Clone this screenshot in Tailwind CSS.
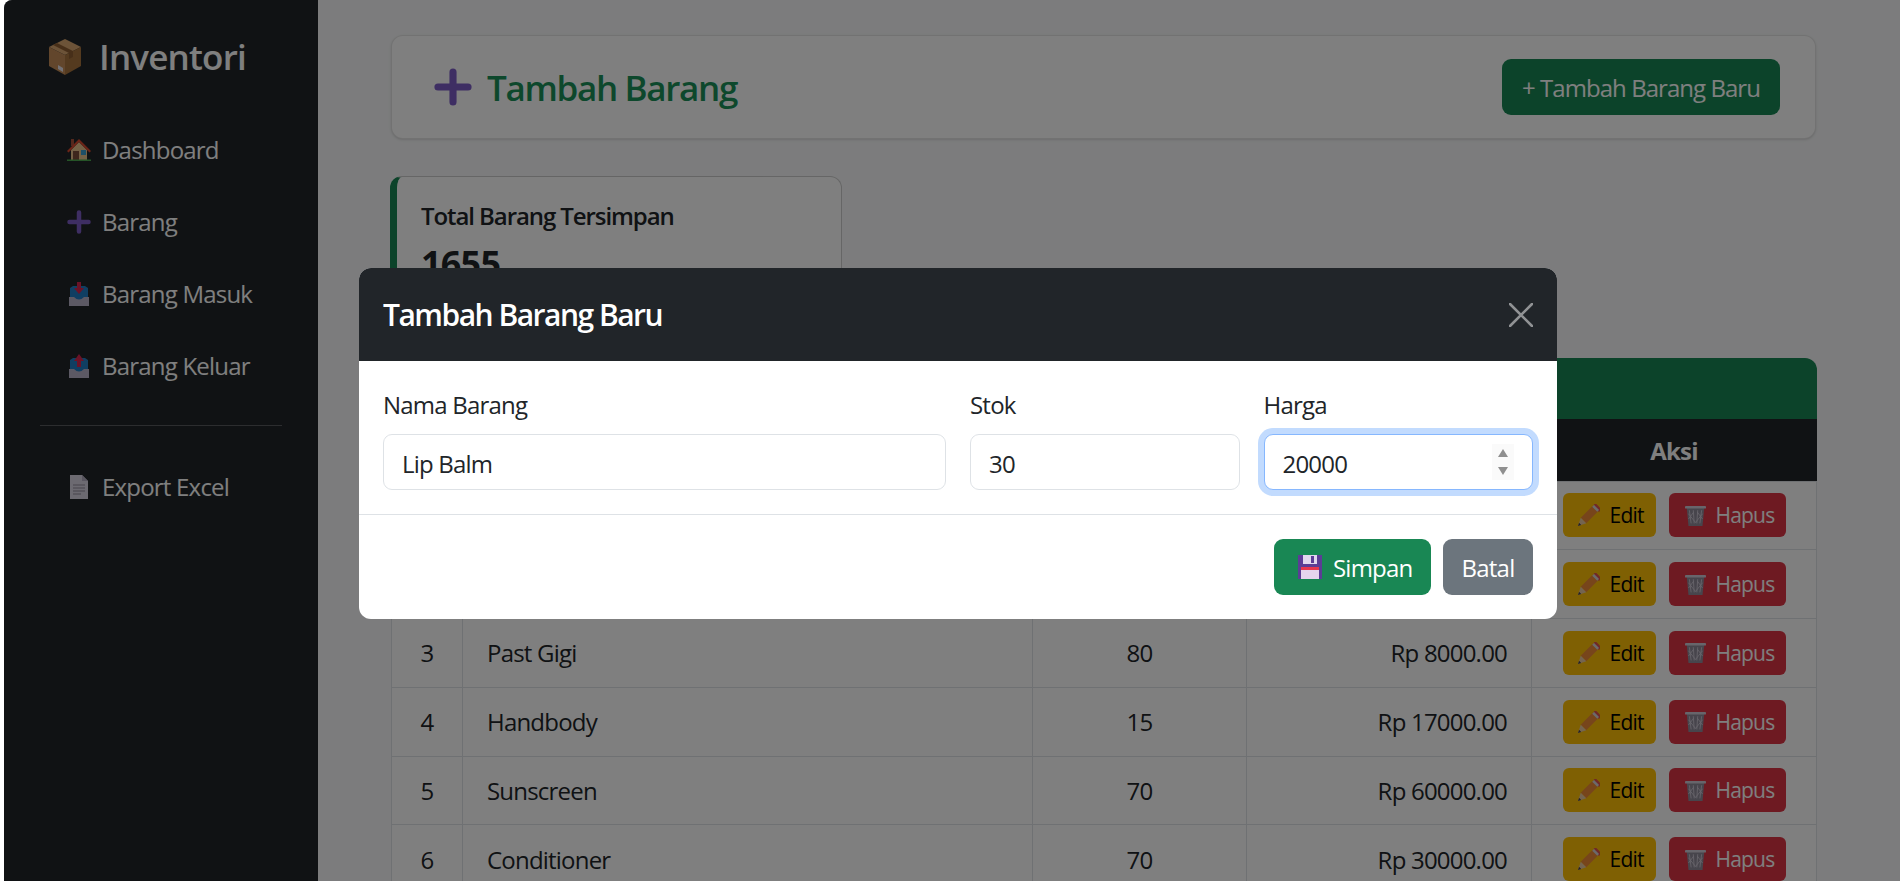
<!DOCTYPE html>
<html lang="id">

<head>
  <meta charset="UTF-8">
  <meta name="viewport" content="width=device-width, initial-scale=1.0">
  <title>Inventori - Tambah Barang</title>
  <script src="https://cdn.jsdelivr.net/npm/@tailwindcss/browser@4"></script>
</head>

<body class="bg-white h-screen overflow-hidden pl-[4px] font-['Open_Sans',sans-serif] text-[24px] leading-[36px] tracking-[-0.033em] text-[#212529]">

  <!-- emoji drawn once, used everywhere -->
  <svg class="hidden">
    <symbol id="i-box" viewBox="0 0 32 36">
      <path d="M16 0 32 8 16 16 0 8Z" fill="#d9a771" />
      <path d="M0 8 16 16V36L0 27Z" fill="#c48d58" />
      <path d="M32 8 16 16V36L32 27Z" fill="#a9743f" />
      <path d="M8 4 24 12V18L20 20V14L4 6Z" fill="#8f5f33" />
      <path d="M9 26 14 29V33L9 30Z" fill="#e6e2ea" />
    </symbol>
    <symbol id="i-house" viewBox="0 0 24 24">
      <rect x="4" y="1" width="3" height="7" fill="#a8503a" />
      <path d="M4 12 12 4 20 12V22H4Z" fill="#e9c48f" />
      <path d="M0 13 12 1 24 13 22.500 14.500 12 4 1.500 14.500Z" fill="#d8492f" />
      <rect x="6" y="13" width="6" height="9" fill="#7a4f3a" />
      <rect x="14" y="12" width="5" height="5" fill="#3a9fd0" />
      <rect x="0" y="21.500" width="24" height="1.500" fill="#4aa84f" />
    </symbol>
    <symbol id="i-plus" viewBox="0 0 24 24">
      <path d="M12 2.500V21.500M2.500 12H21.500" stroke="#7d5cc6" stroke-width="4.500" stroke-linecap="round" />
    </symbol>
    <symbol id="i-in" viewBox="0 0 20 24">
      <path d="M1 6 4 4H16L19 6V18H1Z" fill="#1f7cc4" />
      <path d="M0 15H5Q10 20 15 15H20V24H0Z" fill="#b9b2c9" />
      <path d="M8 0H12V6H15L10 12 5 6H8Z" fill="#d6254f" />
    </symbol>
    <symbol id="i-out" viewBox="0 0 20 24">
      <path d="M1 6 4 4H16L19 6V18H1Z" fill="#1f7cc4" />
      <path d="M0 15H5Q10 20 15 15H20V24H0Z" fill="#b9b2c9" />
      <path d="M8 13H12V7H15L10 0 5 7H8Z" fill="#d6254f" />
    </symbol>
    <symbol id="i-page" viewBox="0 0 18 24">
      <path d="M0 0H12L18 6V24H0Z" fill="#d9d4e2" />
      <path d="M12 0 18 6H12Z" fill="#b3adc0" />
      <path d="M3 10H15M3 13H15M3 16H15M3 19H11" stroke="#8e8899" stroke-width="1" />
    </symbol>
    <symbol id="i-disk" viewBox="0 0 24 24">
      <path d="M0 0H24V24H0Z" fill="#5c3d96" />
      <rect x="5" y="0" width="14" height="9" fill="#e2d7ee" />
      <rect x="13" y="1" width="3" height="7" fill="#5c3d96" />
      <rect x="3" y="12" width="18" height="12" fill="#e6d5ee" />
      <rect x="3" y="12" width="18" height="3" fill="#e8364f" />
    </symbol>
    <symbol id="i-pencil" viewBox="0 0 24 24">
      <path d="M3 15 16 2 22 8 9 21Z" fill="#ee8a36" />
      <path d="M17 1 19 -1 25 5 23 9Z" fill="#e0524f" />
      <path d="M15.500 3 17.500 1 23 6.500 21 8.500Z" fill="#d9d4d4" />
      <path d="M3 15 9 21 0 24Z" fill="#e8c9a0" />
      <path d="M1.200 20.500 3.500 22.800 0 24Z" fill="#4a4048" />
    </symbol>
    <symbol id="i-trash" viewBox="0 0 24 24">
      <path d="M2 3H22L20 24H4Z" fill="#8f8a99" />
      <path d="M5 6 7 21M9.500 6 10.500 21M14.500 6 13.500 21M19 6 17 21M4 10 12 20 20 10M4 16 10 8M20 16 14 8" stroke="#cfc9d6" stroke-width="1" fill="none" />
      <rect x="0" y="1" width="24" height="3" rx="1" fill="#cfcad6" />
    </symbol>
  </svg>

  <div class="relative h-full flex rounded-tl-lg overflow-hidden bg-[#f8f9fa]">

    <!-- Sidebar -->
    <aside class="w-[314px] shrink-0 bg-[#212529] text-white px-[36px]">
      <div class="flex items-center h-[114px] pl-[9px] pb-[1px] gap-[18px] font-semibold text-[35px]">
        <svg class="w-[32px] h-[36px]"><use href="#i-box" /></svg>
        <span>Inventori</span>
      </div>
      <nav class="pl-[27px]">
        <a class="flex items-center h-[72px] gap-[11px]"><svg class="w-[24px] h-[24px] shrink-0"><use href="#i-house" /></svg>Dashboard</a>
        <a class="flex items-center h-[72px] gap-[11px]"><svg class="w-[24px] h-[24px] shrink-0"><use href="#i-plus" /></svg>Barang</a>
        <a class="flex items-center h-[72px] gap-[11px]"><svg class="w-[24px] h-[24px] shrink-0"><use href="#i-in" /></svg>Barang Masuk</a>
        <a class="flex items-center h-[72px] gap-[11px]"><svg class="w-[24px] h-[24px] shrink-0"><use href="#i-out" /></svg>Barang Keluar</a>
      </nav>
      <hr class="mt-[23px] mb-[25px] border-white/25">
      <a class="flex items-center h-[72px] gap-[11px] pl-[27px]"><svg class="w-[24px] h-[24px] shrink-0"><use href="#i-page" /></svg>Export Excel</a>
    </aside>

    <!-- Main content -->
    <main class="flex-1 pl-[73px] pr-[84px] pt-[35px]">
      <div class="h-[104px] bg-white border border-black/10 rounded-xl shadow-sm flex items-center justify-between pl-[42px] pr-[35px]">
        <h1 class="flex items-center gap-[15px] text-[35px] tracking-[-0.038em] pt-[2px] font-semibold text-[#1a9059]">
          <svg class="w-[38px] h-[38px] -mt-[2px]"><use href="#i-plus" /></svg>
          Tambah Barang
        </h1>
        <button class="h-[56px] w-[278px] pt-[2px] tracking-[-0.04em] bg-[#198754] text-white rounded-[9px]">+ Tambah Barang Baru</button>
      </div>

      <div class="mt-[37px] -ml-[1px] w-[452px] h-[134px] bg-white border border-black/20 border-l-[7px] border-l-[#198754] rounded-xl pl-[24px] pt-[21px]">
        <div class="font-semibold tracking-[-0.045em]">Total Barang Tersimpan</div>
        <div class="font-bold text-[36px] leading-[54px] mt-[3px]">1655</div>
      </div>

      <div class="mt-[48px] -mr-[1px] rounded-t-xl overflow-hidden">
        <div class="h-[61px] bg-[#198754] text-white font-semibold flex items-center px-[24px]">Daftar Barang</div>
        <table class="w-full table-fixed border-collapse">
          <colgroup>
            <col class="w-[71px]"><col class="w-[570px]"><col class="w-[214px]"><col class="w-[285px]"><col>
          </colgroup>
          <thead class="bg-[#212529] text-white font-bold">
            <tr class="h-[62px]"><th class="pt-[2px]">No</th><th class="pt-[2px]">Nama Barang</th><th class="pt-[2px]">Stok</th><th class="pt-[2px]">Harga</th><th class="pt-[2px]">Aksi</th></tr>
          </thead>
          <tbody class="bg-white [&_td:not(:last-child)]:pt-[1px]">
            <tr class="h-[68.75px]">
              <td class="border border-[#dee2e6] text-center">1</td><td class="border border-[#dee2e6] px-[24px]">Sabun</td><td class="border border-[#dee2e6] text-center">50</td><td class="border border-[#dee2e6] px-[24px] text-right">Rp 5000.00</td>
              <td class="border border-[#dee2e6]"><div class="flex justify-center gap-[13px]">
                <button class="flex items-center gap-[10px] h-[44px] pl-[15px] w-[93px] bg-[#ffc107] text-black text-[21px] rounded-[6px]"><svg class="w-[22px] h-[22px]"><use href="#i-pencil" /></svg>Edit</button>
                <button class="flex items-center gap-[10px] h-[44px] pl-[16px] w-[117px] bg-[#dc3545] text-white text-[21px] rounded-[6px]"><svg class="w-[21px] h-[21px]"><use href="#i-trash" /></svg>Hapus</button>
              </div></td>
            </tr>
            <tr class="h-[68.75px]">
              <td class="border border-[#dee2e6] text-center">2</td><td class="border border-[#dee2e6] px-[24px]">Shampo</td><td class="border border-[#dee2e6] text-center">40</td><td class="border border-[#dee2e6] px-[24px] text-right">Rp 25000.00</td>
              <td class="border border-[#dee2e6]"><div class="flex justify-center gap-[13px]">
                <button class="flex items-center gap-[10px] h-[44px] pl-[15px] w-[93px] bg-[#ffc107] text-black text-[21px] rounded-[6px]"><svg class="w-[22px] h-[22px]"><use href="#i-pencil" /></svg>Edit</button>
                <button class="flex items-center gap-[10px] h-[44px] pl-[16px] w-[117px] bg-[#dc3545] text-white text-[21px] rounded-[6px]"><svg class="w-[21px] h-[21px]"><use href="#i-trash" /></svg>Hapus</button>
              </div></td>
            </tr>
            <tr class="h-[68.75px]">
              <td class="border border-[#dee2e6] text-center">3</td><td class="border border-[#dee2e6] px-[24px]">Past Gigi</td><td class="border border-[#dee2e6] text-center">80</td><td class="border border-[#dee2e6] px-[24px] text-right">Rp 8000.00</td>
              <td class="border border-[#dee2e6]"><div class="flex justify-center gap-[13px]">
                <button class="flex items-center gap-[10px] h-[44px] pl-[15px] w-[93px] bg-[#ffc107] text-black text-[21px] rounded-[6px]"><svg class="w-[22px] h-[22px]"><use href="#i-pencil" /></svg>Edit</button>
                <button class="flex items-center gap-[10px] h-[44px] pl-[16px] w-[117px] bg-[#dc3545] text-white text-[21px] rounded-[6px]"><svg class="w-[21px] h-[21px]"><use href="#i-trash" /></svg>Hapus</button>
              </div></td>
            </tr>
            <tr class="h-[68.75px]">
              <td class="border border-[#dee2e6] text-center">4</td><td class="border border-[#dee2e6] px-[24px]">Handbody</td><td class="border border-[#dee2e6] text-center">15</td><td class="border border-[#dee2e6] px-[24px] text-right">Rp 17000.00</td>
              <td class="border border-[#dee2e6]"><div class="flex justify-center gap-[13px]">
                <button class="flex items-center gap-[10px] h-[44px] pl-[15px] w-[93px] bg-[#ffc107] text-black text-[21px] rounded-[6px]"><svg class="w-[22px] h-[22px]"><use href="#i-pencil" /></svg>Edit</button>
                <button class="flex items-center gap-[10px] h-[44px] pl-[16px] w-[117px] bg-[#dc3545] text-white text-[21px] rounded-[6px]"><svg class="w-[21px] h-[21px]"><use href="#i-trash" /></svg>Hapus</button>
              </div></td>
            </tr>
            <tr class="h-[68.75px]">
              <td class="border border-[#dee2e6] text-center">5</td><td class="border border-[#dee2e6] px-[24px]">Sunscreen</td><td class="border border-[#dee2e6] text-center">70</td><td class="border border-[#dee2e6] px-[24px] text-right">Rp 60000.00</td>
              <td class="border border-[#dee2e6]"><div class="flex justify-center gap-[13px]">
                <button class="flex items-center gap-[10px] h-[44px] pl-[15px] w-[93px] bg-[#ffc107] text-black text-[21px] rounded-[6px]"><svg class="w-[22px] h-[22px]"><use href="#i-pencil" /></svg>Edit</button>
                <button class="flex items-center gap-[10px] h-[44px] pl-[16px] w-[117px] bg-[#dc3545] text-white text-[21px] rounded-[6px]"><svg class="w-[21px] h-[21px]"><use href="#i-trash" /></svg>Hapus</button>
              </div></td>
            </tr>
            <tr class="h-[68.75px]">
              <td class="border border-[#dee2e6] text-center">6</td><td class="border border-[#dee2e6] px-[24px]">Conditioner</td><td class="border border-[#dee2e6] text-center">70</td><td class="border border-[#dee2e6] px-[24px] text-right">Rp 30000.00</td>
              <td class="border border-[#dee2e6]"><div class="flex justify-center gap-[13px]">
                <button class="flex items-center gap-[10px] h-[44px] pl-[15px] w-[93px] bg-[#ffc107] text-black text-[21px] rounded-[6px]"><svg class="w-[22px] h-[22px]"><use href="#i-pencil" /></svg>Edit</button>
                <button class="flex items-center gap-[10px] h-[44px] pl-[16px] w-[117px] bg-[#dc3545] text-white text-[21px] rounded-[6px]"><svg class="w-[21px] h-[21px]"><use href="#i-trash" /></svg>Hapus</button>
              </div></td>
            </tr>
          </tbody>
        </table>
      </div>
    </main>

    <!-- Modal backdrop -->
    <div class="absolute inset-0 bg-black/50"></div>

    <!-- Modal -->
    <div class="absolute left-[355px] top-[268px] w-[1198px] bg-white rounded-xl overflow-hidden">
      <div class="h-[93px] bg-[#212529] text-white flex items-center justify-between px-[24px]">
        <h5 class="font-semibold text-[30px] leading-[45px] tracking-[-0.05em]">Tambah Barang Baru</h5>
        <svg class="w-[24px] h-[24px] text-white/50" viewBox="0 0 24 24"><path d="M1 1 23 23M23 1 1 23" stroke="currentColor" stroke-width="2.600" stroke-linecap="round" /></svg>
      </div>
      <div class="p-[24px] grid grid-cols-12 gap-x-[24px]">
        <div class="col-span-6">
          <label class="block pt-[2px] mb-[11px]">Nama Barang</label>
          <input type="text" value="Lip Balm" class="w-full h-[56px] px-[18px] pt-[2px] border border-[#dee2e6] rounded-[9px] bg-white">
        </div>
        <div class="col-span-3">
          <label class="block pt-[2px] mb-[11px]">Stok</label>
          <input type="text" value="30" class="w-full h-[56px] px-[18px] pt-[2px] border border-[#dee2e6] rounded-[9px] bg-white">
        </div>
        <div class="col-span-3">
          <label class="block pt-[2px] mb-[11px]">Harga</label>
          <div class="relative">
            <input type="text" value="20000" class="w-full h-[56px] px-[18px] pt-[2px] border border-[#86b7fe] rounded-[9px] bg-white shadow-[0_0_0_6px_#c2dbfe] outline-none">
            <div class="absolute right-[19px] top-[10px] w-[22px] h-[36px] bg-[#fafafa] flex flex-col items-center justify-center gap-[10px]">
              <svg class="w-[10px] h-[8px]" viewBox="0 0 10 8"><path d="M5 0 10 8H0Z" fill="#8f8f8f" /></svg>
              <svg class="w-[10px] h-[8px]" viewBox="0 0 10 8"><path d="M5 8 10 0H0Z" fill="#8f8f8f" /></svg>
            </div>
          </div>
        </div>
      </div>
      <div class="border-t border-[#dee2e6] h-[105px] px-[24px] flex items-center justify-end gap-[12px]">
        <button class="h-[56px] w-[157px] pl-[24px] flex items-center gap-[11px] bg-[#198754] text-white rounded-[9px]"><svg class="w-[24px] h-[24px]"><use href="#i-disk" /></svg><span class="pt-[2px]">Simpan</span></button>
        <button class="h-[56px] w-[90px] pt-[2px] bg-[#6c757d] text-white rounded-[9px]">Batal</button>
      </div>
    </div>
  </div>
</body>

</html>
